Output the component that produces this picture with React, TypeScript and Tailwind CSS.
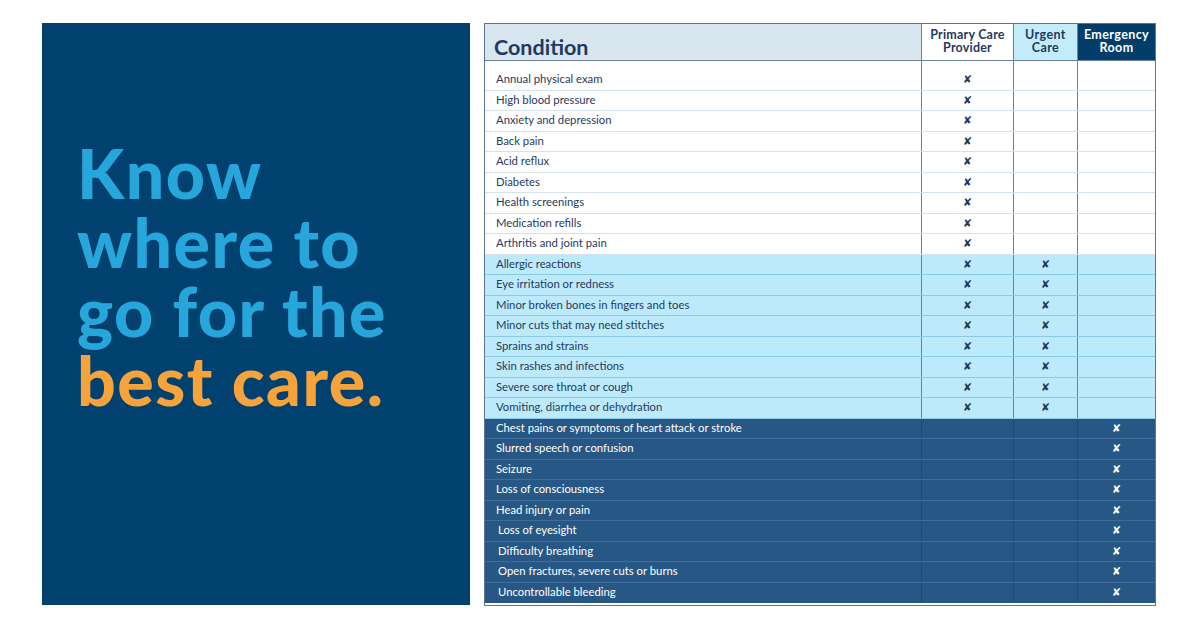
type Row = { label: string; pcp?: boolean; uc?: boolean; er?: boolean; nudge?: boolean };

const primary: Row[] = [
  { label: "Annual physical exam", pcp: true },
  { label: "High blood pressure", pcp: true },
  { label: "Anxiety and depression", pcp: true },
  { label: "Back pain", pcp: true },
  { label: "Acid reflux", pcp: true },
  { label: "Diabetes", pcp: true },
  { label: "Health screenings", pcp: true },
  { label: "Medication refills", pcp: true },
  { label: "Arthritis and joint pain", pcp: true },
];

const urgent: Row[] = [
  { label: "Allergic reactions", pcp: true, uc: true },
  { label: "Eye irritation or redness", pcp: true, uc: true },
  { label: "Minor broken bones in fingers and toes", pcp: true, uc: true },
  { label: "Minor cuts that may need stitches", pcp: true, uc: true },
  { label: "Sprains and strains", pcp: true, uc: true },
  { label: "Skin rashes and infections", pcp: true, uc: true },
  { label: "Severe sore throat or cough", pcp: true, uc: true },
  { label: "Vomiting, diarrhea or dehydration", pcp: true, uc: true },
];

const emergency: Row[] = [
  { label: "Chest pains or symptoms of heart attack or stroke", er: true },
  { label: "Slurred speech or confusion", er: true },
  { label: "Seizure", er: true },
  { label: "Loss of consciousness", er: true },
  { label: "Head injury or pain", er: true },
  { label: "Loss of eyesight", er: true, nudge: true },
  { label: "Difficulty breathing", er: true, nudge: true },
  { label: "Open fractures, severe cuts or burns", er: true, nudge: true },
  { label: "Uncontrollable bleeding", er: true, nudge: true },
];

const cols = "grid grid-cols-[437px_92px_64px_77px]";

const Mark = ({ on }: { on?: boolean }) =>
  on ? <span className="font-['DejaVu_Sans',sans-serif] text-[11px] font-bold leading-none">✘</span> : null;

const Section = ({ rows, tone }: { rows: Row[]; tone: "white" | "cyan" | "dark" }) => {
  const rowCls =
    tone === "white"
      ? "bg-white text-[#1f3a60] border-[#d3e3ee]"
      : tone === "cyan"
        ? "bg-[#bdeafb] text-[#1f3a60] border-[#88cbe5]"
        : "bg-[#275784] text-white border-[#3f6d98]";
  const cellBorder =
    tone === "white" ? "border-[#6d829e]" : tone === "cyan" ? "border-[#5f86a6]" : "border-[#1f4a74]";
  return (
    <>
      {rows.map((r, i) => (
        <div
          key={r.label}
          className={`${cols} h-[20.5px] ${rowCls} ${i === rows.length - 1 && tone === "dark" ? "" : "border-b"}`}
        >
          <div className={`flex items-center border-r ${cellBorder} ${r.nudge ? "pl-[13px]" : "pl-[11px]"} text-[11.3px]`}>
            {r.label}
          </div>
          <div className={`flex items-center justify-center border-r ${cellBorder}`}>
            <Mark on={r.pcp} />
          </div>
          <div className={`flex items-center justify-center border-r ${cellBorder}`}>
            <Mark on={r.uc} />
          </div>
          <div className="flex items-center justify-center">
            <Mark on={r.er} />
          </div>
        </div>
      ))}
    </>
  );
};

export default function App() {
  return (
    <div className="w-[1200px] h-[628px] bg-white flex gap-[14px] pt-[23px] pl-[42px] font-['Lato',sans-serif]">
      <div className="w-[428px] h-[582px] bg-[#00416f] pl-[35px] pt-[115px]">
        <div className="font-black text-[68px] leading-[69px] tracking-[1.5px] text-[#27a6dc]">
          <div>Know</div>
          <div>where to</div>
          <div>go for the</div>
          <div className="text-[#f5a33a]">best care.</div>
        </div>
      </div>

      <div className="w-[670px] h-[581px] border border-[#5e7596] box-content flex flex-col">
        <div className={`${cols} h-[37px] border-b border-[#6d829e]`}>
          <div className="bg-[#d7e6ef] border-r border-[#6d829e] flex items-end pl-[9px]">
            <span className="text-[21.5px] leading-[26px] font-bold text-[#1f3a60]">Condition</span>
          </div>
          <div className="bg-white border-r border-[#6d829e] flex flex-col items-center pt-[4px] text-center text-[12.5px] leading-[13px] tracking-[0.2px] font-bold text-[#1f3a60]">
            <span>Primary Care</span>
            <span>Provider</span>
          </div>
          <div className="bg-[#c3ecfb] border-r border-[#6d829e] flex flex-col items-center pt-[4px] text-center text-[12.5px] leading-[13px] tracking-[0.4px] font-bold text-[#1f3a60]">
            <span>Urgent</span>
            <span>Care</span>
          </div>
          <div className="bg-[#033e6b] flex flex-col items-center pt-[4px] text-center text-[12.5px] leading-[13px] tracking-[0.4px] font-bold text-white">
            <span>Emergency</span>
            <span>Room</span>
          </div>
        </div>
        <div className={`${cols} h-[9px] bg-white`}>
          <div className="border-r border-[#6d829e]" />
          <div className="border-r border-[#6d829e]" />
          <div className="border-r border-[#6d829e]" />
          <div />
        </div>
        <Section rows={primary} tone="white" />
        <Section rows={urgent} tone="cyan" />
        <Section rows={emergency} tone="dark" />
      </div>
    </div>
  );
}
